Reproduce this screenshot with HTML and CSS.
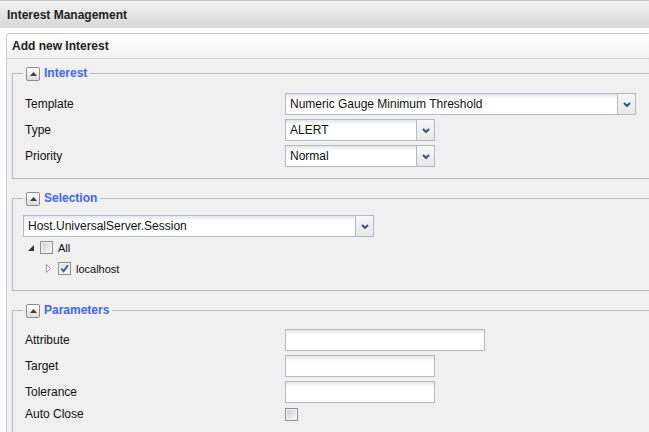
FILE: index.html
```html
<!DOCTYPE html>
<html>
<head>
<meta charset="utf-8">
<title>Interest Management</title>
<link rel="stylesheet" href="styles.css">
</head>
<body>
<div class="app">
  <div class="titlebar">Interest Management</div>
  <div class="panel">
    <div class="panel-header">Add new Interest</div>
    <div class="panel-body">

      <fieldset class="group">
        <legend class="group-legend">
          <span class="toggle"><svg width="7" height="4" viewBox="0 0 7 4"><polygon points="0,4 3.5,0 7,4" fill="#404040"/></svg></span>
          <span class="legend-text">Interest</span>
        </legend>
        <div class="form-grid">
          <span class="field-label">Template</span>
          <div class="combo w351"><span class="combo-text">Numeric Gauge Minimum Threshold</span><span class="trigger"><svg width="8" height="5" viewBox="0 0 8 5"><path d="M1 1 L4 4 L7 1" stroke="#3a4e80" stroke-width="2" fill="none"/></svg></span></div>
          <span class="field-label">Type</span>
          <div class="combo w150"><span class="combo-text">ALERT</span><span class="trigger"><svg width="8" height="5" viewBox="0 0 8 5"><path d="M1 1 L4 4 L7 1" stroke="#3a4e80" stroke-width="2" fill="none"/></svg></span></div>
          <span class="field-label">Priority</span>
          <div class="combo w150"><span class="combo-text">Normal</span><span class="trigger"><svg width="8" height="5" viewBox="0 0 8 5"><path d="M1 1 L4 4 L7 1" stroke="#3a4e80" stroke-width="2" fill="none"/></svg></span></div>
        </div>
      </fieldset>

      <fieldset class="group group-selection">
        <legend class="group-legend">
          <span class="toggle"><svg width="7" height="4" viewBox="0 0 7 4"><polygon points="0,4 3.5,0 7,4" fill="#404040"/></svg></span>
          <span class="legend-text">Selection</span>
        </legend>
        <div class="combo w351"><span class="combo-text">Host.UniversalServer.Session</span><span class="trigger"><svg width="8" height="5" viewBox="0 0 8 5"><path d="M1 1 L4 4 L7 1" stroke="#3a4e80" stroke-width="2" fill="none"/></svg></span></div>
        <div class="tree">
          <div class="tree-row level-0">
            <span class="expander"><svg width="6" height="6" viewBox="0 0 6 6"><polygon points="6,0 6,6 0,6" fill="#333"/></svg></span>
            <span class="check"></span>
            <span class="tree-text">All</span>
          </div>
          <div class="tree-row level-1">
            <span class="expander"><svg width="5" height="9" viewBox="0 0 5 9"><polygon points="0.5,0.5 4.5,4.5 0.5,8.5" fill="#fff" stroke="#9a9a9a"/></svg></span>
            <span class="check checked"><svg width="9" height="9" viewBox="0 0 9 9"><path d="M1.5 4.5 L3.6 7.2 L8 1.2" stroke="#2b4ea3" stroke-width="1.8" fill="none"/></svg></span>
            <span class="tree-text">localhost</span>
          </div>
        </div>
      </fieldset>

      <fieldset class="group group-params">
        <legend class="group-legend">
          <span class="toggle"><svg width="7" height="4" viewBox="0 0 7 4"><polygon points="0,4 3.5,0 7,4" fill="#404040"/></svg></span>
          <span class="legend-text">Parameters</span>
        </legend>
        <div class="form-grid">
          <span class="field-label">Attribute</span>
          <div class="textfield w200"></div>
          <span class="field-label">Target</span>
          <div class="textfield w150"></div>
          <span class="field-label">Tolerance</span>
          <div class="textfield w150"></div>
          <span class="field-label compact">Auto Close</span>
          <div class="check-cell"><span class="check"></span></div>
        </div>
      </fieldset>

    </div>
  </div>
</div>
</body>
</html>
```

FILE: styles.css
```css
html, body {
  margin: 0;
  padding: 0;
  background: #ffffff;
  overflow: hidden;
}

body {
  font-family: "Liberation Sans", Arial, sans-serif;
  font-size: 12px;
  color: #111;
}

.app {
  width: 649px;
  height: 432px;
  overflow: hidden;
}

.titlebar {
  height: 25px;
  padding: 2px 0 0 7px;
  border-top: 1px solid #c6c6c6;
  background: linear-gradient(to bottom, #f3f3f3, #d7d7d7);
  font-weight: bold;
  line-height: 25px;
  color: #222;
}

.panel {
  margin: 5px 0 0 6px;
  width: 720px;
  border: 1px solid #cfcfcf;
  border-radius: 3px 0 0 0;
  background: #f0f0f0;
}

.panel-header {
  height: 24px;
  line-height: 24px;
  padding-left: 5px;
  border-bottom: 1px solid #cfcfd4;
  border-radius: 3px 0 0 0;
  background: linear-gradient(to bottom, #ffffff, #f1f1f1);
  font-weight: bold;
  color: #222;
}

.panel-body {
  padding: 0 0 20px 0;
  background: #f0f0f0;
}

.group {
  margin: 7px 0 0 5px;
  padding: 12px 10px 11px 10px;
  border: 1px solid #b9bccb;
  min-width: 0;
}

.group-selection {
  margin-top: 12px;
  padding-top: 9px;
  padding-bottom: 11px;
}

.group-params {
  margin-top: 12px;
  padding-top: 11px;
}

.group-legend {
  display: flex;
  align-items: center;
  height: 15px;
  padding: 0 3px;
}

.toggle {
  display: inline-flex;
  align-items: center;
  justify-content: center;
  width: 12px;
  height: 12px;
  border: 1px solid #8d8d8d;
  border-radius: 2px;
  background: linear-gradient(to bottom, #ffffff, #dcdcdc);
  margin-right: 4px;
}

.legend-text {
  font-weight: bold;
  color: #3f66ff;
  line-height: 15px;
}

.form-grid {
  display: grid;
  grid-template-columns: 262px auto;
  row-gap: 4px;
  align-items: center;
  justify-items: start;
}

.field-label {
  padding-left: 2px;
  line-height: 22px;
  color: #111;
}

.field-label.compact {
  line-height: 14px;
}

.combo {
  display: flex;
  height: 22px;
  box-sizing: border-box;
  border: 1px solid #b5b8c8;
  background: linear-gradient(to bottom, #e3e6e7, #ffffff 5px);
}

.w351 { width: 351px; }
.w200 { width: 200px; }
.w150 { width: 150px; }

.combo-text {
  flex: 1;
  padding: 0 4px;
  line-height: 20px;
  white-space: nowrap;
  overflow: hidden;
  color: #111;
}

.trigger {
  display: flex;
  align-items: center;
  justify-content: center;
  width: 17px;
  border-left: 1px solid #b5b8c8;
  background: linear-gradient(to bottom, #f6f6f6, #e8e8ea);
}

.textfield {
  height: 22px;
  box-sizing: border-box;
  border: 1px solid #b5b8c8;
  background: linear-gradient(to bottom, #e3e6e7, #ffffff 5px);
}

.check-cell {
  height: 14px;
  display: flex;
  align-items: center;
}

.check {
  display: inline-flex;
  align-items: center;
  justify-content: center;
  box-sizing: border-box;
  width: 13px;
  height: 13px;
  border: 1px solid #8e8e8e;
  background: linear-gradient(135deg, #cdcfd3, #f8f8f8);
  box-shadow: inset 0 0 0 1px #f2f2f2;
}

.check.checked {
  background: linear-gradient(135deg, #dadde2, #ffffff);
}

.tree {
  display: flex;
  flex-direction: column;
}

.tree-row {
  display: flex;
  align-items: center;
  height: 21px;
}

.level-0 { padding-left: 5px; }
.level-1 { padding-left: 23px; }

.expander {
  display: inline-flex;
  align-items: center;
  width: 12px;
}

.tree-text {
  margin-left: 5px;
  font-size: 11px;
  color: #111;
}
```
